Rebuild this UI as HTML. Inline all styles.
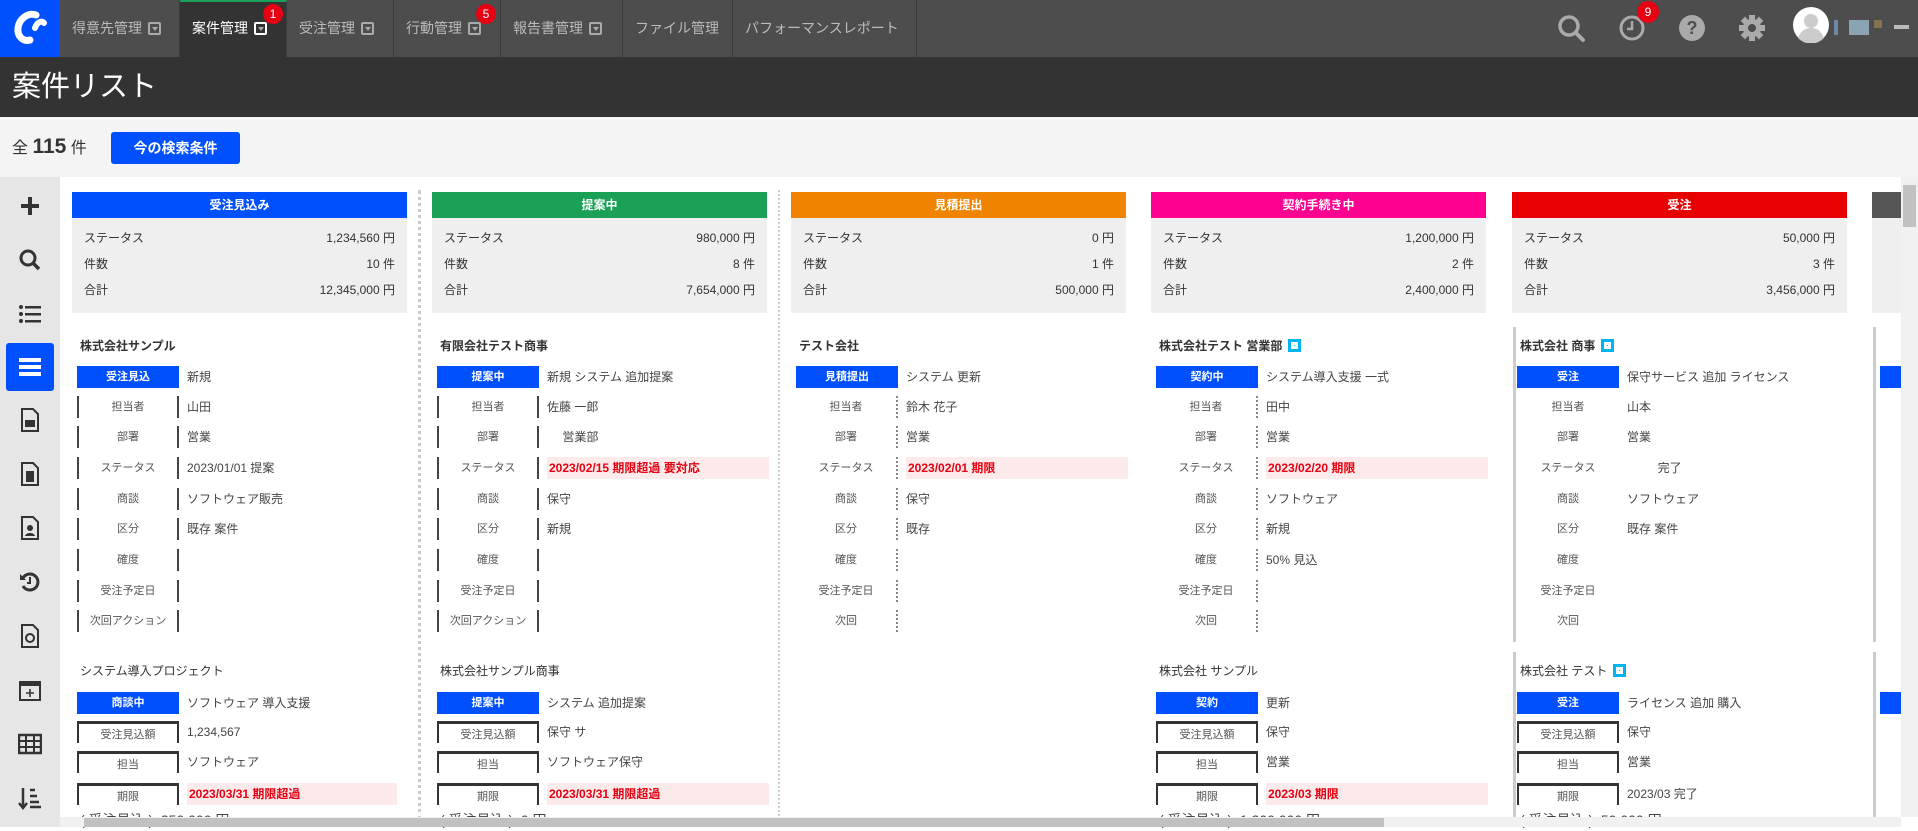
<!DOCTYPE html>
<html><head><meta charset="utf-8">
<style>
*{margin:0;padding:0;box-sizing:border-box}
body{width:1918px;height:827px;overflow:hidden;background:#fff;font-family:"Liberation Sans","Noto Sans CJK JP",sans-serif;position:relative;color:#333}
.a{position:absolute}
#nav{left:0;top:0;width:1918px;height:57px;background:#4d4d4d}
.tab{position:absolute;top:0;height:57px;color:#bbb;font-size:14px;line-height:57px;padding-left:12px;border-right:1px solid #3c3c3c;white-space:nowrap}
.tab .dd{display:inline-block;width:13px;height:13px;border:2px solid #aaa;border-radius:2px;vertical-align:-2px;margin-left:6px;position:relative}
.tab .dd:after{content:"";position:absolute;left:2px;top:3px;border-left:3px solid transparent;border-right:3px solid transparent;border-top:4px solid #aaa}
.badge{position:absolute;width:20px;height:20px;border-radius:50%;background:#e60012;color:#fff;font-size:12px;line-height:20px;text-align:center}
#hdr{left:0;top:57px;width:1918px;height:60px;background:#333;color:#fff;font-size:29px;line-height:60px;padding-left:12px}
#cnt{left:0;top:117px;width:1918px;height:60px;background:#f4f4f4}
#side{left:0;top:177px;width:60px;height:650px;background:#e6e6e6}
.ic{position:absolute;left:18px;width:24px;height:24px}
.col{position:absolute;top:177px;width:335px;height:640px}
.hd{position:absolute;left:0;top:15px;width:335px;height:26px;color:#fff;font-size:12px;font-weight:bold;text-align:center;line-height:26px}
.sm{position:absolute;left:0;top:41px;width:335px;height:95px;background:#efefef;font-size:12px}
.sm div{position:absolute;left:12px;right:12px;height:16px}
.sm span{position:absolute;right:0}
.tt{position:absolute;left:8px;font-size:12px;font-weight:bold;color:#333;white-space:nowrap}
.lb{position:absolute;left:5px;width:102px;height:22px;font-size:11px;text-align:center;line-height:22px;color:#555}
.lb.b{background:#0050ff;color:#fff;font-weight:bold}
.lb.k{border-left:2px solid #444;border-right:2px solid #444}
.lb.d{border-right:2px dotted #888}
.lb.t{border-top:3px solid #333;border-left:2px solid #333;border-right:2px solid #333}
.v{position:absolute;left:115px;font-size:12px;color:#444;white-space:nowrap;height:22px;line-height:22px}
.v.p{background:#fdeaea;color:#e60012;width:222px;font-weight:bold;padding-left:2px}
.sq{display:inline-block;width:13px;height:13px;background:#00b4f0;margin-left:6px;vertical-align:-2px;border:3px solid #00b4f0;background-clip:padding-box;box-shadow:inset 0 0 0 3px #fff}
.sep{position:absolute;top:190px;width:2px;height:630px;border-left:3px dotted #ccc}
</style></head><body>
<div id="nav" class="a">
  <div class="a" style="left:0;top:0;width:60px;height:57px;background:#0050ff">
    <svg width="60" height="57" viewBox="0 0 60 57"><path d="M36 15c-8-3-17 4-18 13-1 8 5 14 12 12" fill="none" stroke="#fff" stroke-width="7" stroke-linecap="round"/><path d="M35 28c2-6 7-8 9-5" fill="none" stroke="#fff" stroke-width="6" stroke-linecap="round"/></svg>
  </div>
  <div class="tab" style="left:60px;width:120px">得意先管理<span class="dd"></span></div>
  <div class="tab" style="left:180px;width:107px;background:#333;color:#fff;border-top:2px solid #1aa157;line-height:53px">案件管理<span class="dd" style="border-color:#fff"></span></div>
  <div class="badge" style="left:263px;top:4px">1</div>
  <div class="tab" style="left:287px;width:107px">受注管理<span class="dd"></span></div>
  <div class="tab" style="left:394px;width:107px">行動管理<span class="dd"></span></div>
  <div class="badge" style="left:476px;top:4px">5</div>
  <div class="tab" style="left:501px;width:122px">報告書管理<span class="dd"></span></div>
  <div class="tab" style="left:623px;width:110px">ファイル管理</div>
  <div class="tab" style="left:733px;width:184px">パフォーマンスレポート</div>
  <svg class="a" style="left:1557px;top:14px" width="30" height="30" viewBox="0 0 30 30"><circle cx="12" cy="12" r="9" fill="none" stroke="#aaa" stroke-width="3.5"/><path d="M19 19l7 7" stroke="#aaa" stroke-width="4" stroke-linecap="round"/></svg>
  <svg class="a" style="left:1618px;top:14px" width="28" height="28" viewBox="0 0 28 28"><circle cx="14" cy="14" r="11" fill="none" stroke="#aaa" stroke-width="3"/><path d="M14 7v8h-5" fill="none" stroke="#aaa" stroke-width="2.5"/></svg>
  <div class="badge" style="left:1637px;top:1px;width:22px;height:22px;line-height:22px">9</div>
  <svg class="a" style="left:1678px;top:14px" width="28" height="28" viewBox="0 0 28 28"><circle cx="14" cy="14" r="13" fill="#aaa"/><text x="14" y="20" text-anchor="middle" font-family="Liberation Sans" font-weight="bold" font-size="18" fill="#4d4d4d">?</text></svg>
  <svg class="a" style="left:1738px;top:14px" width="28" height="28" viewBox="0 0 28 28"><g fill="#aaa"><circle cx="14" cy="14" r="9"/><rect x="11" y="1" width="6" height="26"/><rect x="1" y="11" width="26" height="6"/><rect x="11" y="1" width="6" height="26" transform="rotate(45 14 14)"/><rect x="11" y="1" width="6" height="26" transform="rotate(-45 14 14)"/></g><circle cx="14" cy="14" r="4" fill="#4d4d4d"/></svg>
  <svg class="a" style="left:1793px;top:7px" width="36" height="36" viewBox="0 0 36 36"><circle cx="18" cy="18" r="18" fill="#fff"/><circle cx="18" cy="14" r="7" fill="#ccc"/><path d="M5 31c3-8 8-10 13-10s10 2 13 10a18 18 0 0 1-26 0z" fill="#ccc"/></svg>
  <div class="a" style="left:1834px;top:20px;width:4px;height:15px;background:#6a8aa8"></div>
  <div class="a" style="left:1849px;top:20px;width:20px;height:15px;background:#8aa4b4"></div>
  <div class="a" style="left:1874px;top:20px;width:8px;height:8px;background:#857050"></div>
  <div class="a" style="left:1894px;top:25px;width:15px;height:4px;background:#bbb"></div>
</div>
<div id="hdr" class="a">案件リスト</div>
<div id="cnt" class="a">
  <div class="a" style="left:12px;top:17px;font-size:16px;color:#333">全 <b style="font-size:21px">115</b> 件</div>
  <div class="a" style="left:111px;top:15px;width:129px;height:32px;background:#0050ff;color:#fff;border-radius:3px;font-size:14px;font-weight:bold;text-align:center;line-height:32px">今の検索条件</div>
</div>
<div id="side" class="a">
  <svg class="ic" style="top:17px" viewBox="0 0 24 24"><path d="M12 3v18M3 12h18" stroke="#333" stroke-width="4"/></svg>
  <svg class="ic" style="top:71px" viewBox="0 0 24 24"><circle cx="10" cy="10" r="7" fill="none" stroke="#333" stroke-width="3"/><path d="M15 15l6 6" stroke="#333" stroke-width="3.5"/></svg>
  <svg class="ic" style="top:125px" viewBox="0 0 24 24"><g fill="#333"><circle cx="3" cy="5" r="2"/><circle cx="3" cy="12" r="2"/><circle cx="3" cy="19" r="2"/><rect x="7" y="4" width="16" height="2.5"/><rect x="7" y="11" width="16" height="2.5"/><rect x="7" y="18" width="16" height="2.5"/></g></svg>
  <div class="a" style="left:6px;top:166px;width:48px;height:48px;background:#0050ff;border-radius:3px"></div>
  <svg class="ic" style="top:178px" viewBox="0 0 24 24"><g fill="#fff"><rect x="1" y="3" width="22" height="4"/><rect x="1" y="10" width="22" height="4"/><rect x="1" y="17" width="22" height="4"/></g></svg>
  <svg class="ic" style="top:231px" viewBox="0 0 24 24"><path d="M4 1h11l5 5v17H4z" fill="none" stroke="#333" stroke-width="2"/><rect x="7" y="12" width="10" height="7" fill="#333"/></svg>
  <svg class="ic" style="top:285px" viewBox="0 0 24 24"><path d="M4 1h11l5 5v17H4z" fill="none" stroke="#333" stroke-width="2"/><rect x="8" y="9" width="8" height="11" fill="#333"/></svg>
  <svg class="ic" style="top:339px" viewBox="0 0 24 24"><path d="M4 1h11l5 5v17H4z" fill="none" stroke="#333" stroke-width="2"/><circle cx="12" cy="12" r="3" fill="#333"/><path d="M7 20c1-4 9-4 10 0z" fill="#333"/></svg>
  <svg class="ic" style="top:393px" viewBox="0 0 24 24"><path d="M5 8a8 8 0 1 1 0 8" fill="none" stroke="#333" stroke-width="3"/><path d="M2 4v6h6" fill="#333"/><path d="M12 7v6h-3" fill="none" stroke="#333" stroke-width="2"/></svg>
  <svg class="ic" style="top:447px" viewBox="0 0 24 24"><path d="M4 1h11l5 5v17H4z" fill="none" stroke="#333" stroke-width="2"/><circle cx="12" cy="14" r="4" fill="none" stroke="#333" stroke-width="2"/></svg>
  <svg class="ic" style="top:501px" viewBox="0 0 24 24"><rect x="2" y="4" width="20" height="18" fill="none" stroke="#333" stroke-width="2"/><rect x="2" y="4" width="20" height="4" fill="#333"/><path d="M12 11v8M8 15h8" stroke="#333" stroke-width="1.6"/></svg>
  <svg class="ic" style="top:555px" viewBox="0 0 24 24"><rect x="1" y="3" width="22" height="18" fill="none" stroke="#333" stroke-width="2.5"/><path d="M1 9h22M1 15h22M8 3v18M16 3v18" stroke="#333" stroke-width="2"/></svg>
  <svg class="ic" style="top:609px" viewBox="0 0 24 24"><path d="M5 2v19M1 17l4 5 4-5" fill="none" stroke="#333" stroke-width="2.5"/><path d="M12 4h5M12 10h7M12 16h9M12 21h11" stroke="#333" stroke-width="2.5"/></svg>
</div>

<!-- separators -->
<div class="sep" style="left:418px"></div>

<!-- column 1 -->
<div class="col" style="left:72px">
  <div class="hd" style="background:#0050ff">受注見込み</div>
  <div class="sm"><div style="top:11px">ステータス<span>1,234,560 円</span></div><div style="top:37px">件数<span>10 件</span></div><div style="top:63px">合計<span>12,345,000 円</span></div></div>
  <div class="tt" style="top:160px">株式会社サンプル</div>
  <div class="lb b" style="top:189px">受注見込</div><div class="v" style="top:189px">新規</div>
  <div class="lb k" style="top:219px">担当者</div><div class="v" style="top:219px">山田</div>
  <div class="lb k" style="top:249px">部署</div><div class="v" style="top:249px">営業</div>
  <div class="lb k" style="top:280px">ステータス</div><div class="v" style="top:280px">2023/01/01 提案</div>
  <div class="lb k" style="top:311px">商談</div><div class="v" style="top:311px">ソフトウェア販売</div>
  <div class="lb k" style="top:341px">区分</div><div class="v" style="top:341px">既存 案件</div>
  <div class="lb k" style="top:372px">確度</div>
  <div class="lb k" style="top:403px">受注予定日</div>
  <div class="lb k" style="top:433px">次回アクション</div>
  <div class="tt" style="top:485px;font-weight:normal">システム導入プロジェクト</div>
  <div class="lb b" style="top:515px">商談中</div><div class="v" style="top:515px">ソフトウェア 導入支援</div>
  <div class="lb t" style="top:544px">受注見込額</div><div class="v" style="top:544px">1,234,567</div>
  <div class="lb t" style="top:574px">担当</div><div class="v" style="top:574px">ソフトウェア</div>
  <div class="lb t" style="top:606px">期限</div><div class="v p" style="top:606px;width:210px">2023/03/31 期限超過</div>
  <div class="v" style="top:632px;left:8px;font-size:14px">( 受注見込 )&nbsp; 250,000 円</div>
</div>

<!-- column 2 -->
<div class="col" style="left:432px">
  <div class="hd" style="background:#1aa157">提案中</div>
  <div class="sm"><div style="top:11px">ステータス<span>980,000 円</span></div><div style="top:37px">件数<span>8 件</span></div><div style="top:63px">合計<span>7,654,000 円</span></div></div>
  <div class="tt" style="top:160px">有限会社テスト商事</div>
  <div class="lb b" style="top:189px">提案中</div><div class="v" style="top:189px">新規 システム 追加提案</div>
  <div class="lb k" style="top:219px">担当者</div><div class="v" style="top:219px">佐藤 一郎</div>
  <div class="lb k" style="top:249px">部署</div><div class="v" style="top:249px">　 営業部</div>
  <div class="lb k" style="top:280px">ステータス</div><div class="v p" style="top:280px">2023/02/15 期限超過 要対応</div>
  <div class="lb k" style="top:311px">商談</div><div class="v" style="top:311px">保守</div>
  <div class="lb k" style="top:341px">区分</div><div class="v" style="top:341px">新規</div>
  <div class="lb k" style="top:372px">確度</div>
  <div class="lb k" style="top:403px">受注予定日</div>
  <div class="lb k" style="top:433px">次回アクション</div>
  <div class="tt" style="top:485px;font-weight:normal">株式会社サンプル商事</div>
  <div class="lb b" style="top:515px">提案中</div><div class="v" style="top:515px">システム 追加提案</div>
  <div class="lb t" style="top:544px">受注見込額</div><div class="v" style="top:544px">保守 サ</div>
  <div class="lb t" style="top:574px">担当</div><div class="v" style="top:574px">ソフトウェア保守</div>
  <div class="lb t" style="top:606px">期限</div><div class="v p" style="top:606px">2023/03/31 期限超過</div>
  <div class="v" style="top:632px;left:8px;font-size:14px">( 受注見込 )&nbsp; 0 円</div>
</div>
<div class="sep" style="left:778px;border-left:2px dotted #ccc"></div>

<!-- column 3 -->
<div class="col" style="left:791px">
  <div class="hd" style="background:#f08300">見積提出</div>
  <div class="sm"><div style="top:11px">ステータス<span>0 円</span></div><div style="top:37px">件数<span>1 件</span></div><div style="top:63px">合計<span>500,000 円</span></div></div>
  <div class="tt" style="top:160px">テスト会社</div>
  <div class="lb b" style="top:189px">見積提出</div><div class="v" style="top:189px">システム 更新</div>
  <div class="lb d" style="top:219px">担当者</div><div class="v" style="top:219px">鈴木 花子</div>
  <div class="lb d" style="top:249px">部署</div><div class="v" style="top:249px">営業</div>
  <div class="lb d" style="top:280px">ステータス</div><div class="v p" style="top:280px">2023/02/01 期限</div>
  <div class="lb d" style="top:311px">商談</div><div class="v" style="top:311px">保守</div>
  <div class="lb d" style="top:341px">区分</div><div class="v" style="top:341px">既存</div>
  <div class="lb d" style="top:372px">確度</div>
  <div class="lb d" style="top:403px">受注予定日</div>
  <div class="lb d" style="top:433px">次回</div>
</div>

<!-- column 4 -->
<div class="col" style="left:1151px">
  <div class="hd" style="background:#ff0090">契約手続き中</div>
  <div class="sm"><div style="top:11px">ステータス<span>1,200,000 円</span></div><div style="top:37px">件数<span>2 件</span></div><div style="top:63px">合計<span>2,400,000 円</span></div></div>
  <div class="tt" style="top:160px">株式会社テスト 営業部<span class="sq"></span></div>
  <div class="lb b" style="top:189px">契約中</div><div class="v" style="top:189px">システム導入支援 一式</div>
  <div class="lb d" style="top:219px">担当者</div><div class="v" style="top:219px">田中</div>
  <div class="lb d" style="top:249px">部署</div><div class="v" style="top:249px">営業</div>
  <div class="lb d" style="top:280px">ステータス</div><div class="v p" style="top:280px">2023/02/20 期限</div>
  <div class="lb d" style="top:311px">商談</div><div class="v" style="top:311px">ソフトウェア</div>
  <div class="lb d" style="top:341px">区分</div><div class="v" style="top:341px">新規</div>
  <div class="lb d" style="top:372px">確度</div><div class="v" style="top:372px">50% 見込</div>
  <div class="lb d" style="top:403px">受注予定日</div>
  <div class="lb d" style="top:433px">次回</div>
  <div class="tt" style="top:485px;font-weight:normal">株式会社 サンプル</div>
  <div class="lb b" style="top:515px">契約</div><div class="v" style="top:515px">更新</div>
  <div class="lb t" style="top:544px">受注見込額</div><div class="v" style="top:544px">保守</div>
  <div class="lb t" style="top:574px">担当</div><div class="v" style="top:574px">営業</div>
  <div class="lb t" style="top:606px">期限</div><div class="v p" style="top:606px">2023/03 期限</div>
  <div class="v" style="top:632px;left:8px;font-size:14px">( 受注見込 )&nbsp; 1,200,000 円</div>
</div>
<div class="a" style="left:1513px;top:327px;width:3px;height:315px;background:#ccc"></div>
<div class="a" style="left:1513px;top:652px;width:3px;height:170px;background:#ccc"></div>

<!-- column 5 -->
<div class="col" style="left:1512px">
  <div class="hd" style="background:#e60000">受注</div>
  <div class="sm"><div style="top:11px">ステータス<span>50,000 円</span></div><div style="top:37px">件数<span>3 件</span></div><div style="top:63px">合計<span>3,456,000 円</span></div></div>
  <div class="tt" style="top:160px">株式会社 商事<span class="sq"></span></div>
  <div class="lb b" style="top:189px">受注</div><div class="v" style="top:189px">保守サービス 追加 ライセンス</div>
  <div class="lb" style="top:219px">担当者</div><div class="v" style="top:219px">山本</div>
  <div class="lb" style="top:249px">部署</div><div class="v" style="top:249px">営業</div>
  <div class="lb" style="top:280px">ステータス</div><div class="v" style="top:280px">　 　 完了</div>
  <div class="lb" style="top:311px">商談</div><div class="v" style="top:311px">ソフトウェア</div>
  <div class="lb" style="top:341px">区分</div><div class="v" style="top:341px">既存 案件</div>
  <div class="lb" style="top:372px">確度</div>
  <div class="lb" style="top:403px">受注予定日</div>
  <div class="lb" style="top:433px">次回</div>
  <div class="tt" style="top:485px;font-weight:normal">株式会社 テスト<span class="sq"></span></div>
  <div class="lb b" style="top:515px">受注</div><div class="v" style="top:515px">ライセンス 追加 購入</div>
  <div class="lb t" style="top:544px">受注見込額</div><div class="v" style="top:544px">保守</div>
  <div class="lb t" style="top:574px">担当</div><div class="v" style="top:574px">営業</div>
  <div class="lb t" style="top:606px">期限</div><div class="v" style="top:606px">2023/03 完了</div>
  <div class="v" style="top:632px;left:8px;font-size:14px">( 受注見込 )&nbsp; 50,000 円</div>
</div>
<div class="a" style="left:1873px;top:327px;width:3px;height:315px;background:#ccc"></div>
<div class="a" style="left:1873px;top:652px;width:3px;height:170px;background:#ccc"></div>
<div class="a" style="left:1872px;top:192px;width:30px;height:26px;background:#555"></div>
<div class="a" style="left:1872px;top:218px;width:30px;height:95px;background:#efefef"></div>
<div class="a" style="left:1880px;top:366px;width:22px;height:22px;background:#0050ff"></div>
<div class="a" style="left:1880px;top:692px;width:22px;height:22px;background:#0050ff"></div>

<!-- scrollbars -->
<div class="a" style="left:1901px;top:177px;width:17px;height:640px;background:#f1f1f1"></div>
<div class="a" style="left:1903px;top:185px;width:13px;height:42px;background:#c1c1c1"></div>
<div class="a" style="left:60px;top:817px;width:1841px;height:10px;background:#f1f1f1"></div>
<div class="a" style="left:84px;top:818px;width:1300px;height:9px;background:#c1c1c1"></div>
</body></html>
